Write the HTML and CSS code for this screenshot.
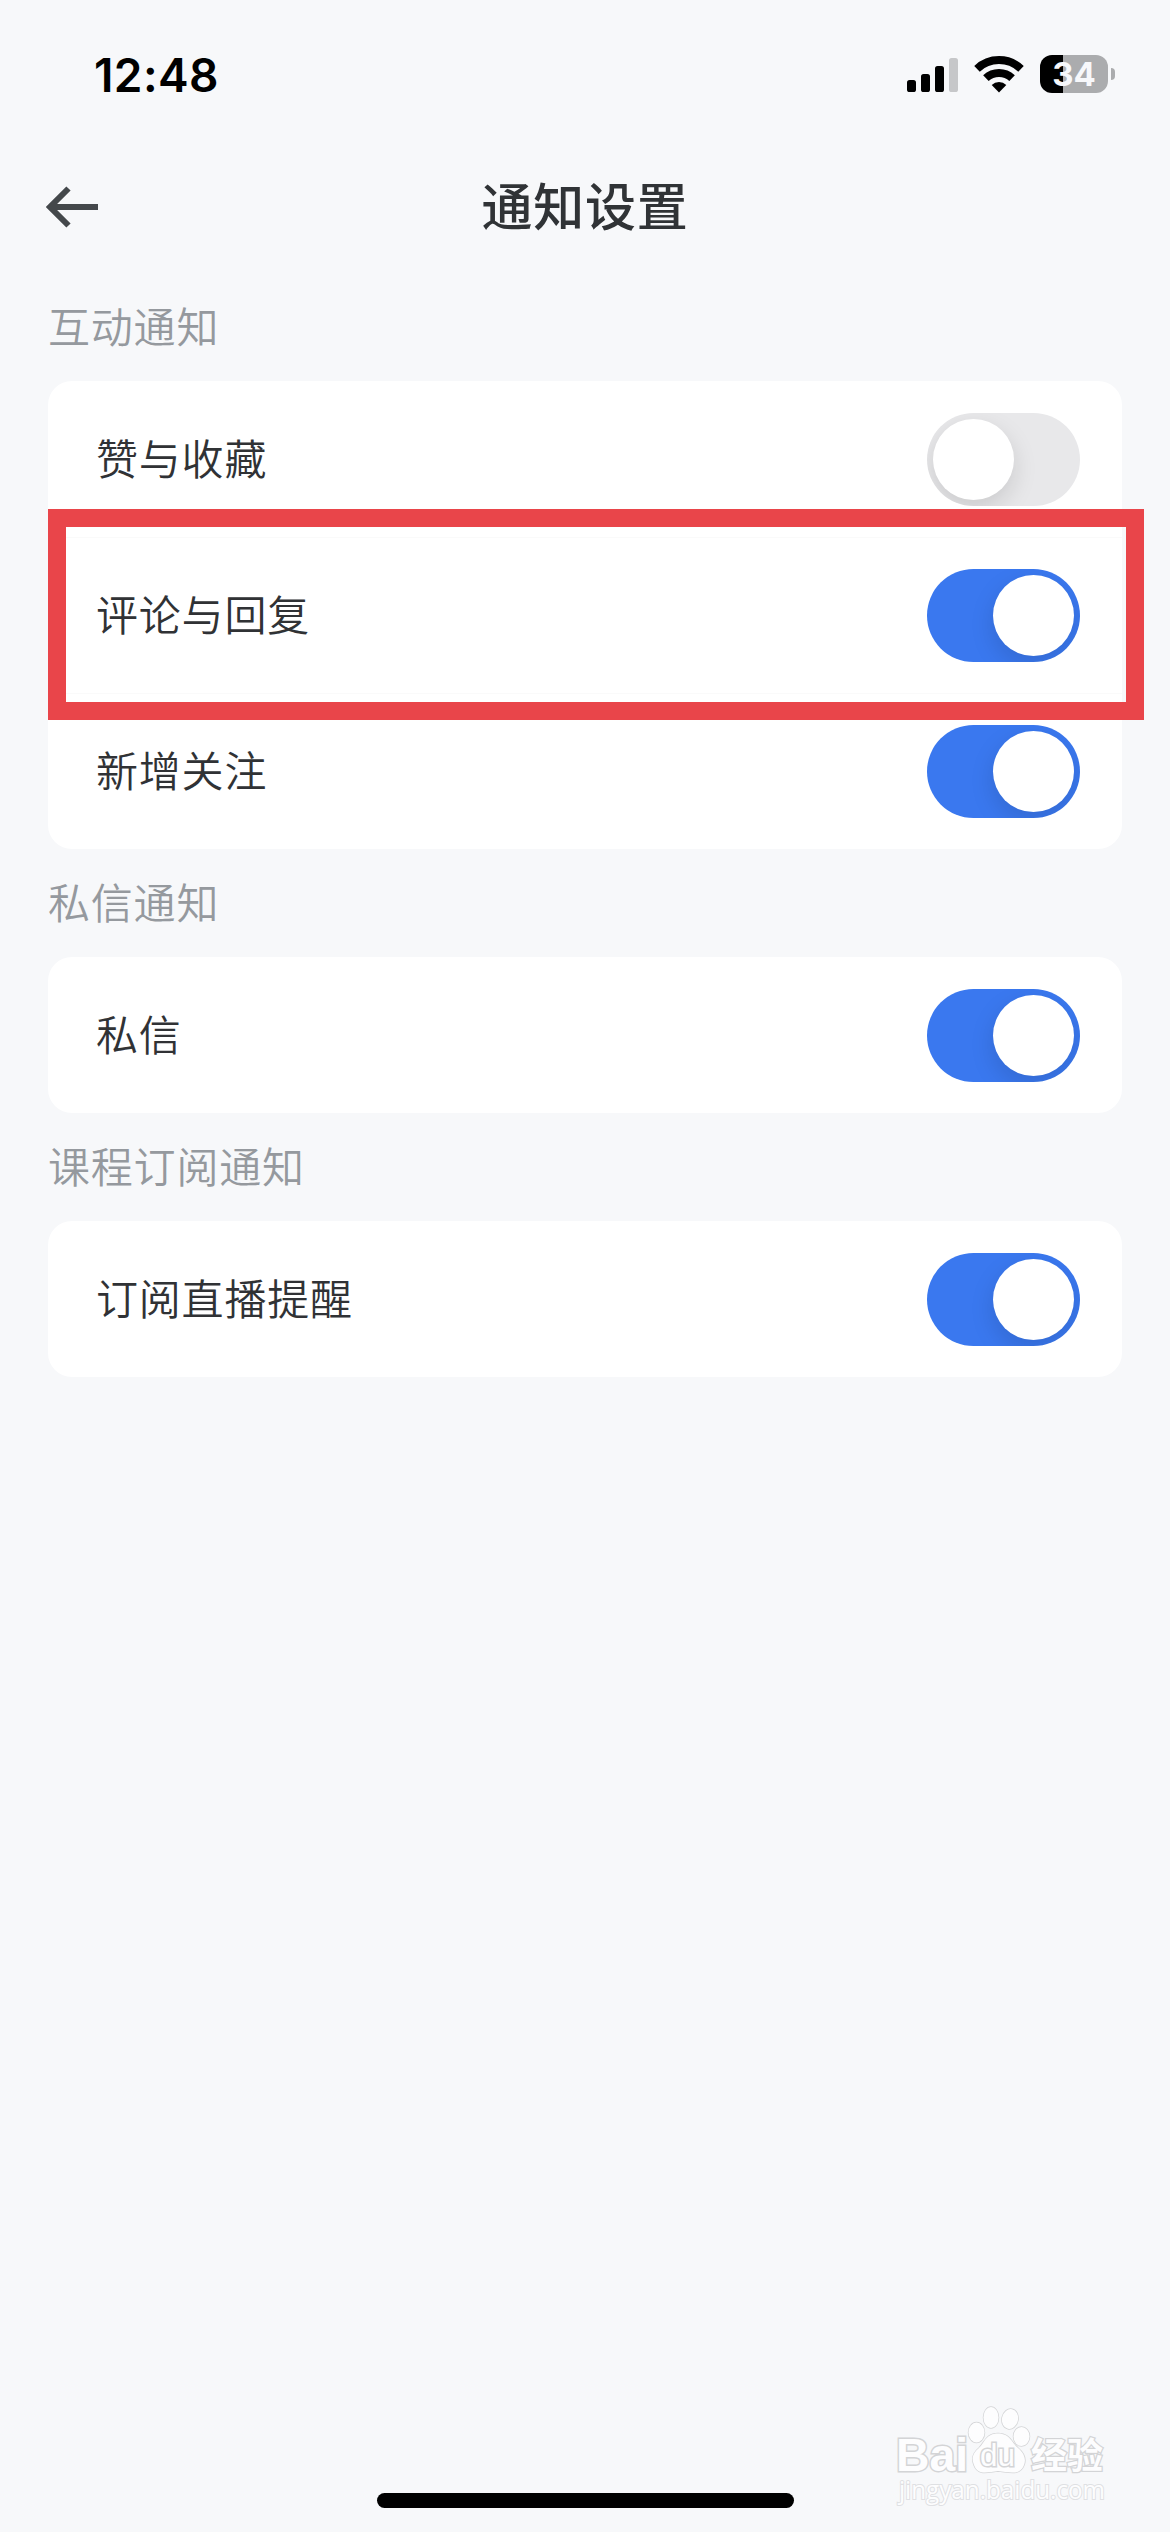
FILE: index.html
```html
<!DOCTYPE html>
<html lang="zh-CN">
<head>
<meta charset="utf-8">
<title>通知设置</title>
<link rel="stylesheet" href="styles.css">
</head>
<body>
<div class="screen">
  <div class="status-bar">
    <span class="clock">12:48</span>
    <div class="status-icons">
      <svg class="signal" viewBox="0 0 51 34">
        <rect x="0" y="22" width="9" height="12" rx="2.6"/>
        <rect x="14" y="16" width="9" height="18" rx="2.6"/>
        <rect x="28" y="8" width="9" height="26" rx="2.6"/>
        <rect class="dim" x="42" y="0" width="9" height="34" rx="2.6"/>
      </svg>
      <svg class="wifi" viewBox="0 0 50 36">
        <path class="arc" d="M3 12.8A32 32 0 0 1 47 12.8"/>
        <path class="arc" d="M11.9 22.2A19 19 0 0 1 38.1 22.2"/>
        <path d="M25 36.4L17.7 29a10.5 10.5 0 0 1 14.6 0Z"/>
      </svg>
      <div class="battery"><span class="battery-level">34</span><i class="battery-tip"></i></div>
    </div>
  </div>

  <header class="nav">
    <svg class="back" viewBox="0 0 54 42"><path d="M23.5 2.5L5 21l18.500 18.500M5.500 21H53"/></svg>
    <h1 class="nav-title">通知设置</h1>
  </header>

  <main class="settings">
    <h2 class="group-title">互动通知</h2>
    <section class="card">
      <div class="row"><span class="label">赞与收藏</span><span class="switch"><i class="knob"></i></span></div>
      <div class="row"><span class="label">评论与回复</span><span class="switch on"><i class="knob"></i></span></div>
      <div class="row"><span class="label">新增关注</span><span class="switch on"><i class="knob"></i></span></div>
      <div class="highlight"></div>
    </section>
    <h2 class="group-title">私信通知</h2>
    <section class="card">
      <div class="row"><span class="label">私信</span><span class="switch on"><i class="knob"></i></span></div>
    </section>
    <h2 class="group-title">课程订阅通知</h2>
    <section class="card">
      <div class="row"><span class="label">订阅直播提醒</span><span class="switch on"><i class="knob"></i></span></div>
    </section>
  </main>

  <div class="home-indicator"></div>

  <svg class="watermark" viewBox="890 2400 225 112">
    <g class="mark">
      <ellipse cx="976.500" cy="2432.500" rx="8" ry="10"/>
      <ellipse cx="991" cy="2417.500" rx="7.500" ry="10.500"/>
      <ellipse cx="1010" cy="2419" rx="8" ry="10" transform="rotate(12 1010 2419)"/>
      <ellipse cx="1021.500" cy="2436.500" rx="8" ry="9.500"/>
      <path d="M998 2433.500C1010 2433.500 1012 2443 1018 2448C1025 2454 1026 2460 1024 2465C1020 2476 1009 2472 998 2471C988 2472 978 2476 974 2465C971 2458 973 2453 979 2448C985 2442 986 2433.500 998 2433.500Z"/>
      <text class="wm-brand" x="896" y="2471" textLength="72" lengthAdjust="spacingAndGlyphs">Bai</text>
      <text class="wm-du" x="980" y="2466" textLength="35" lengthAdjust="spacingAndGlyphs">du</text>
      <text class="wm-cn" x="1031" y="2469" textLength="72">经验</text>
      <text class="wm-url" x="899" y="2499" textLength="206" lengthAdjust="spacingAndGlyphs">jingyan.baidu.com</text>
    </g>
  </svg>
</div>
</body>
</html>
```
FILE: styles.css
```css
* { box-sizing: border-box; }

body {
  margin: 0;
  background: #f7f8fa;
  font-family: "Noto Sans CJK SC", sans-serif;
}

.screen {
  position: relative;
  display: flex;
  flex-direction: column;
  width: 1170px;
  height: 2532px;
  overflow: hidden;
}

.status-bar {
  display: flex;
  justify-content: space-between;
  align-items: center;
  height: 148px;
  margin-bottom: -7px;
  padding: 0 62px 0 94px;
}

.clock {
  padding-top: 1px;
  font: 600 46px/1 Inter, sans-serif;
  letter-spacing: .4px;
  color: #000;
}

.status-icons { display: flex; align-items: center; }

.signal { width: 51px; height: 34px; margin: 2px 16px 0 0; }
.signal .dim { fill: #c6c7c9; }
.wifi { width: 50px; height: 36px; margin-right: 16px; overflow: visible; }
.arc { fill: none; stroke: #000; stroke-width: 8; }

.battery { display: flex; align-items: center; gap: 3px; width: 68px; }

.battery-level {
  flex: none;
  width: 68px;
  height: 38px;
  border-radius: 12px;
  background: linear-gradient(90deg, #000 23px, #abacae 23px);
  color: #f7f8fb;
  font: 700 33px/38px Inter, sans-serif;
  text-align: center;
}

.battery-tip {
  flex: none;
  width: 4px;
  height: 12px;
  border-radius: 0 6px 6px 0;
  background: #abacae;
}

.nav {
  display: grid;
  grid-template-columns: 54px 1fr 54px;
  align-items: center;
  height: 132px;
  padding: 0 45px;
}

.back {
  width: 54px;
  height: 42px;
  fill: none;
  stroke: #44484b;
  stroke-width: 6;
}

.nav-title {
  margin: 0;
  padding-bottom: 5px;
  font-size: 51px;
  font-weight: 500;
  line-height: 127px;
  letter-spacing: .7px;
  text-align: center;
  color: #303336;
}

.settings { padding: 0 48px; }

.group-title {
  margin: 0;
  height: 108px;
  font-size: 42px;
  font-weight: 350;
  line-height: 104px;
  letter-spacing: .8px;
  color: #95999e;
}

.card {
  position: relative;
  border-radius: 24px;
  background: #fff;
}

.row {
  display: flex;
  justify-content: space-between;
  align-items: center;
  height: 156px;
  padding: 0 42px 0 48px;
}

.row + .row { box-shadow: inset 0 1px #fafafa; }

.label {
  padding-bottom: 4px;
  font-size: 42px;
  font-weight: 350;
  line-height: 60px;
  letter-spacing: .8px;
  color: #303235;
}

.switch {
  display: flex;
  width: 153px;
  height: 93px;
  padding: 6px;
  border-radius: 47px;
  overflow: hidden;
  background: #e8e8ea;
}

.switch.on { justify-content: flex-end; background: #3a78ef; }

.knob {
  width: 81px;
  height: 81px;
  border-radius: 50%;
  background: #fff;
  box-shadow: 0 9px 24px rgba(0, 0, 0, .13);
}

.highlight {
  position: absolute;
  top: 128px;
  left: 0;
  width: 1096px;
  height: 211px;
  border: 18px solid #e9454a;
}

.home-indicator {
  width: 417px;
  height: 15px;
  margin: auto auto 24px 377px;
  border-radius: 8px;
  background: #000;
}

.watermark {
  position: absolute;
  left: 890px;
  top: 2400px;
  width: 225px;
  height: 112px;
}

.mark {
  fill: #fdfdfe;
  stroke: #d3d4d6;
  stroke-width: 1.5;
  paint-order: stroke;
}

.wm-brand { font: 700 46px "Liberation Sans", sans-serif; stroke-width: 3; }
.wm-du { font: 400 31px "Liberation Sans", sans-serif; stroke-width: 3; }
.wm-cn { font: 700 36px "Noto Sans CJK SC", sans-serif; stroke-width: 2.5; }
.wm-url { font: 400 25px "Open Sans", sans-serif; stroke: #dfe0e3; stroke-width: 2; }
```
